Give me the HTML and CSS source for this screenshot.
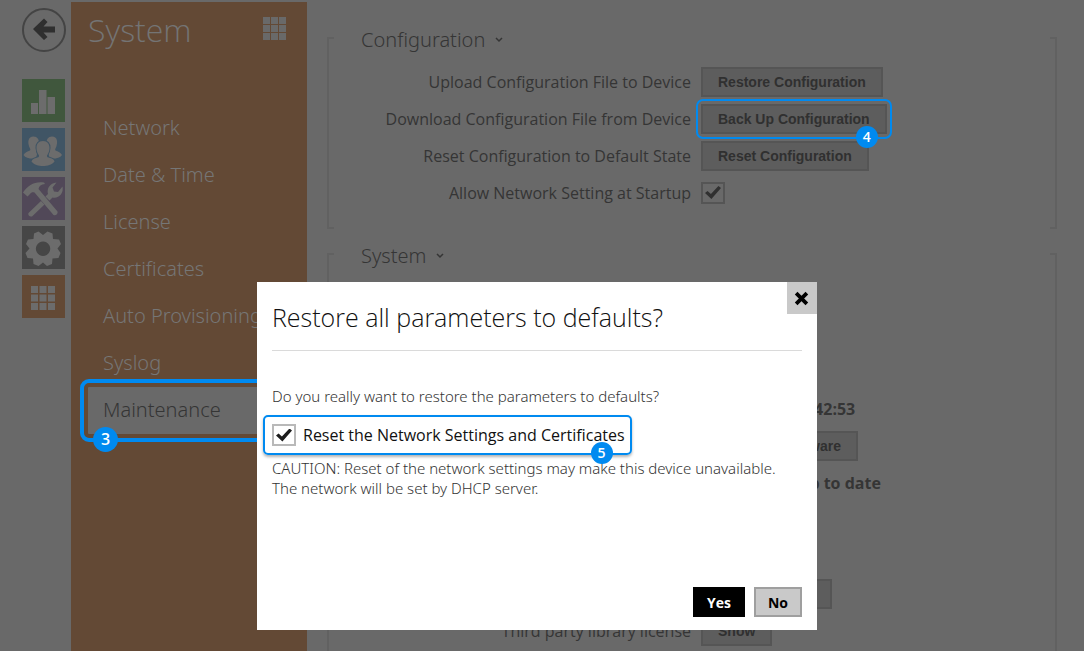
FILE: index.html
```html
<!DOCTYPE html>
<html lang="en">
<head>
  <meta charset="UTF-8">
  <meta name="viewport" content="width=device-width, initial-scale=1.0">
  <title>System - Maintenance</title>
  <link rel="stylesheet" href="styles.css">
</head>
<body>

  <aside class="rail">
    <a href="#" class="back" aria-label="Back">
      <svg viewBox="0 0 44 44"><circle cx="22" cy="22" r="21" fill="none" stroke="#444" stroke-width="2"/><path d="M11 21L22 10.500L25.500 14L21.500 18.500H33V24.500H21.500L25.500 29L22 32Z" fill="#2f2f2f"/></svg>
    </a>
    <a href="#" class="tile green" aria-label="Status">
      <svg viewBox="0 0 43 43"><path d="M9 24h7v11H9zM17 11h7.500v24H17zM25.500 18H33v17h-7.500z"/></svg>
    </a>
    <a href="#" class="tile blue" aria-label="Directory">
      <svg viewBox="0 0 43 43">
        <path d="M11.500 8.500c4 0 5.500 3 5.500 6.500-3 2-3.500 6-2 11l-1 4.500C8 31 3.500 30 1.500 27c1-2.500 4-3.500 6.500-4.500.8-.8 0-2-.7-3.500C5.500 14 6 8.500 11.500 8.500z"/>
        <path d="M30 8.500c-4 0-5.500 3-5.500 6.500 3 2 3.500 6 2 11l1 4.500c6 .5 10.500-.5 12.500-3.500-1-2.500-4-3.500-6.500-4.500-.8-.8 0-2 .7-3.500C36 14 35.500 8.500 30 8.500z"/>
        <path class="front" d="M21 13c4.500 0 6.500 3 6.500 7 0 3-1 5-2.500 7.500-.4 1.500 1 2 3 2.500 2.500.8 4 1.500 4.500 3.500-3 3.500-7 4.500-11.500 4.500S12.500 37 9.500 33.500c.5-2 2-2.700 4.500-3.500 2-.5 3.400-1 3-2.500-1.500-2.500-2.500-4.500-2.500-7.500 0-4 2-7 6.500-7z"/>
      </svg>
    </a>
    <a href="#" class="tile purple" aria-label="Hardware">
      <svg viewBox="0 0 43 43">
        <path d="M1 15.500C6 8 13 4 22 5.500l1 1.500c-4 .5-6 2-6.500 5L35.500 34.500c.7 2-1.500 4.500-4 3.500L12.500 15.500c-2-.5-3.500 0-4.500 1.500l-2.500 2.500z"/>
        <path d="M6.500 36l12.500-12 3.500 3.500L10 39.500c-2 .5-4.500-1.500-3.500-3.500zM23.500 19.500l2.500-2.500c-1.500-5.500 2-11 8.500-11.500l-4 5 1.500 4 4 .5 4.500-5.500c1.500 7-4 12.500-10 11l-3 3z"/>
      </svg>
    </a>
    <a href="#" class="tile grey" aria-label="Services">
      <svg viewBox="0 0 43 43"><path fill-rule="evenodd" d="M16.500 5.500l4.500 3.500 4.500-3.500 5 2 .5 5.500 6 .5 2 4.500-3.500 4.500 3 4.500-2 5-6 .5-.5 5.500-5 2-4-3.500-4.500 3.500-5-2-.5-5.500-5.500-.5-2-5L7.500 22.500 4 18l2-4.500 5.500-.5.500-5.500zM21 15.500a7.200 7.200 0 1 0 .1 0z"/></svg>
    </a>
    <a href="#" class="tile orange" aria-label="System">
      <svg viewBox="0 0 43 43"><path d="M9 11h7v7H9zm8.500 0h7v7h-7zm8.500 0h7v7h-7zM9 19.500h7v7H9zm8.500 0h7v7h-7zm8.500 0h7v7h-7zM9 28h7v7H9zm8.500 0h7v7h-7zm8.500 0h7v7h-7z"/></svg>
    </a>
  </aside>

  <nav class="sidebar">
    <header class="sidebar-head">
      <h1>System</h1>
      <svg class="grid-icon" viewBox="0 0 24 24"><path d="M0 0h7v7H0zm8 0h7v7H8zm8 0h7v7h-7zM0 8h7v7H0zm8 0h7v7H8zm8 0h7v7h-7zM0 16h7v7H0zm8 0h7v7H8zm8 0h7v7h-7z"/></svg>
    </header>
    <ul class="menu">
      <li><a href="#">Network</a></li>
      <li><a href="#">Date &amp; Time</a></li>
      <li><a href="#">License</a></li>
      <li><a href="#">Certificates</a></li>
      <li><a href="#">Auto Provisioning</a></li>
      <li><a href="#">Syslog</a></li>
      <li class="current"><a href="#">Maintenance</a><span class="step">3</span></li>
    </ul>
  </nav>

  <main class="content">
    <section class="group">
      <h2>Configuration <svg class="chevron" viewBox="0 0 8 6"><path d="M1 1l3 3 3-3"/></svg></h2>
      <div class="row">
        <label for="restore">Upload Configuration File to Device</label>
        <div><button class="btn" id="restore">Restore Configuration</button></div>
      </div>
      <div class="row">
        <label for="backup">Download Configuration File from Device</label>
        <div><span class="marked"><button class="btn" id="backup">Back Up Configuration</button><span class="step">4</span></span></div>
      </div>
      <div class="row">
        <label for="reset">Reset Configuration to Default State</label>
        <div><button class="btn" id="reset">Reset Configuration</button></div>
      </div>
      <div class="row">
        <label for="startup">Allow Network Setting at Startup</label>
        <div><input type="checkbox" class="check dim" id="startup" checked></div>
      </div>
    </section>

    <section class="group system">
      <h2>System <svg class="chevron" viewBox="0 0 8 6"><path d="M1 1l3 3 3-3"/></svg></h2>
      <div class="row"></div>
      <div class="row"></div>
      <div class="row"></div>
      <div class="row"><span></span><strong>5 Mar 2019 08:42:53</strong></div>
      <div class="row"><span></span><div><button class="btn">Upgrade Firmware</button></div></div>
      <div class="row"><span></span><strong>Firmware is up to date</strong></div>
      <div class="row"></div>
      <div class="row"></div>
      <div class="row"><span></span><div><button class="btn">Restart Device</button></div></div>
      <div class="row">
        <label for="license">Third party library license</label>
        <div><button class="btn" id="license">Show</button></div>
      </div>
    </section>
  </main>

  <div class="overlay">
    <div class="dialog" role="dialog" aria-labelledby="dialog-title">
      <button class="close" aria-label="Close">
        <svg viewBox="0 0 14 14"><path d="M2 2l10 10M12 2L2 12"/></svg>
      </button>
      <h2 id="dialog-title">Restore all parameters to defaults?</h2>
      <p>Do you really want to restore the parameters to defaults?</p>
      <div class="option">
        <input type="checkbox" class="check" id="reset-net" checked>
        <label for="reset-net">Reset the Network Settings and Certificates</label>
        <span class="step">5</span>
      </div>
      <p>CAUTION: Reset of the network settings may make this device unavailable.<br>The network will be set by DHCP server.</p>
      <div class="actions">
        <button class="yes">Yes</button>
        <button class="no">No</button>
      </div>
    </div>
  </div>

</body>
</html>
```
FILE: styles.css
```css
* { box-sizing: border-box; }
body {
  margin: 0;
  height: 100vh;
  overflow: hidden;
  display: flex;
  background: #696969;
  color: #353535;
  font-family: "Open Sans", sans-serif;
  font-size: 16px;
}
h1, h2, p, ul { margin: 0; padding: 0; font-weight: 300; }
svg { display: block; }

.rail {
  width: 71px;
  flex: none;
  padding: 8px 0 0 22px;
  display: flex;
  flex-direction: column;
  gap: 6px;
}
.back { width: 44px; height: 44px; margin-bottom: 21px; }
.tile { width: 43px; height: 43px; }
.tile svg { fill: #6c6c6c; }
.green { background: #40573d; }
.blue { background: #405565; }
.blue .front { stroke: #405565; stroke-width: 2; paint-order: stroke; }
.purple { background: #514858; }
.grey { background: #464646; }
.orange { background: #634935; }

.sidebar {
  width: 236px;
  flex: none;
  margin-top: 2px;
  background: #634935;
}
.sidebar-head {
  display: flex;
  justify-content: space-between;
  padding: 4px 20px 0 17px;
}
.sidebar-head h1 {
  font-size: 32px;
  line-height: 48px;
  color: #747474;
}
.grid-icon { width: 24px; height: 24px; margin-top: 11px; fill: #696969; }
.menu {
  list-style: none;
  padding: 51px 0 0 17px;
}
.menu a {
  display: block;
  height: 47px;
  padding-left: 15px;
  line-height: 46px;
  font-family: "Noto Sans", sans-serif;
  font-size: 20px;
  font-weight: 300;
  color: #767676;
  text-decoration: none;
}
.menu .current {
  position: relative;
  background: #696969;
  outline: 4px solid #008af0;
  outline-offset: 4px;
  border-radius: 1px;
}
.menu .current a { color: #353535; }

.step {
  position: absolute;
  right: 17px;
  bottom: -11px;
  width: 22px;
  height: 22px;
  border-radius: 50%;
  background: #008af0;
  color: #fff;
  font-size: 14px;
  font-weight: 600;
  line-height: 22px;
  text-align: center;
}
.menu .step {
  left: 5px;
  bottom: -18px;
  width: 25px;
  height: 25px;
  font-size: 16px;
  line-height: 25px;
}

.content {
  flex: 1;
  padding: 37px 27px 0 20px;
}
.group {
  display: flow-root;
  height: 192px;
  padding-left: 8px;
  border: solid #616161;
  border-width: 0 2px;
  background:
    linear-gradient(#616161, #616161) 0 0 / 5px 2px,
    linear-gradient(#616161, #616161) 100% 0 / 5px 2px,
    linear-gradient(#616161, #616161) 0 100% / 5px 2px,
    linear-gradient(#616161, #616161) 100% 100% / 5px 2px;
  background-repeat: no-repeat;
}
.group.system { height: auto; margin-top: 24px; padding-bottom: 24px; }
.group h2 {
  display: flex;
  align-items: center;
  gap: 10px;
  margin: -11px 0 9px 24px;
  font-family: "Noto Sans", sans-serif;
  font-size: 20px;
  line-height: 28px;
}
.chevron { width: 8px; height: 6px; fill: none; stroke: #353535; stroke-width: 1.5; }
.row {
  display: grid;
  grid-template-columns: 1fr 1fr;
  gap: 10px;
  align-items: center;
  height: 37px;
}
.row > label { text-align: right; }
.btn, .no, .yes {
  height: 30px;
  padding: 0 15px;
  border: 2px solid #555;
  border-radius: 0;
  background: #5d5d5d;
  color: #303030;
  font: bold 14px "Liberation Sans", Arial, sans-serif;
}
.btn { display: block; }
.marked {
  position: relative;
  display: block;
  width: fit-content;
  outline: 2px solid #008af0;
  outline-offset: 3px;
  border-radius: 2px;
}
.marked .step { right: 9px; bottom: -14px; }

.check {
  appearance: none;
  width: 24px;
  height: 22px;
  margin: 0;
  border: 2px solid #b9b9b9;
  display: grid;
  place-items: center;
}
.check::before {
  content: "";
  width: 16px;
  height: 13px;
  background: #1c1c1c;
  clip-path: polygon(0 54%, 16% 38%, 37% 62%, 84% 0, 100% 16%, 40% 100%);
}
.check.dim { border-color: #555; }
.check.dim::before { background: #303030; }

.overlay {
  position: fixed;
  inset: 0;
  display: flex;
  justify-content: center;
  align-items: flex-end;
  padding: 0 10px 21px 0;
}
.dialog {
  position: relative;
  width: 560px;
  min-height: 348px;
  padding: 15px 15px 13px;
  display: flex;
  flex-direction: column;
  background: #fff;
  color: #333;
}
.dialog h2 {
  margin-bottom: 35px;
  padding-bottom: 13px;
  border-bottom: 1px solid #dadada;
  font-size: 25px;
  line-height: 40px;
  color: #111;
}
.dialog p {
  font-family: "Noto Sans", sans-serif;
  font-size: 15px;
  line-height: 20px;
}
.close {
  position: absolute;
  top: 0;
  right: 0;
  width: 30px;
  height: 32px;
  padding: 0 7px;
  border: none;
  background: #c9c9c9;
}
.close svg { width: 15px; height: 15px; fill: none; stroke: #000; stroke-width: 3.5; }
.option {
  position: relative;
  display: flex;
  align-items: center;
  gap: 7px;
  align-self: flex-start;
  height: 40px;
  margin: 9px 0 3px -9px;
  padding: 0 5px 0 7px;
  border: 2px solid #008af0;
  border-radius: 5px;
  box-shadow: 0 2px 3px rgba(0, 0, 0, 0.3);
  color: #111;
}
.actions {
  margin-top: auto;
  display: flex;
  justify-content: flex-end;
  gap: 9px;
}
.no, .yes { font-family: "Open Sans", sans-serif; padding: 0 12px; }
.no { border-color: #9f9f9f; background: #c9c9c9; color: #000; }
.yes { border-color: #000; background: #000; color: #fff; }
```
